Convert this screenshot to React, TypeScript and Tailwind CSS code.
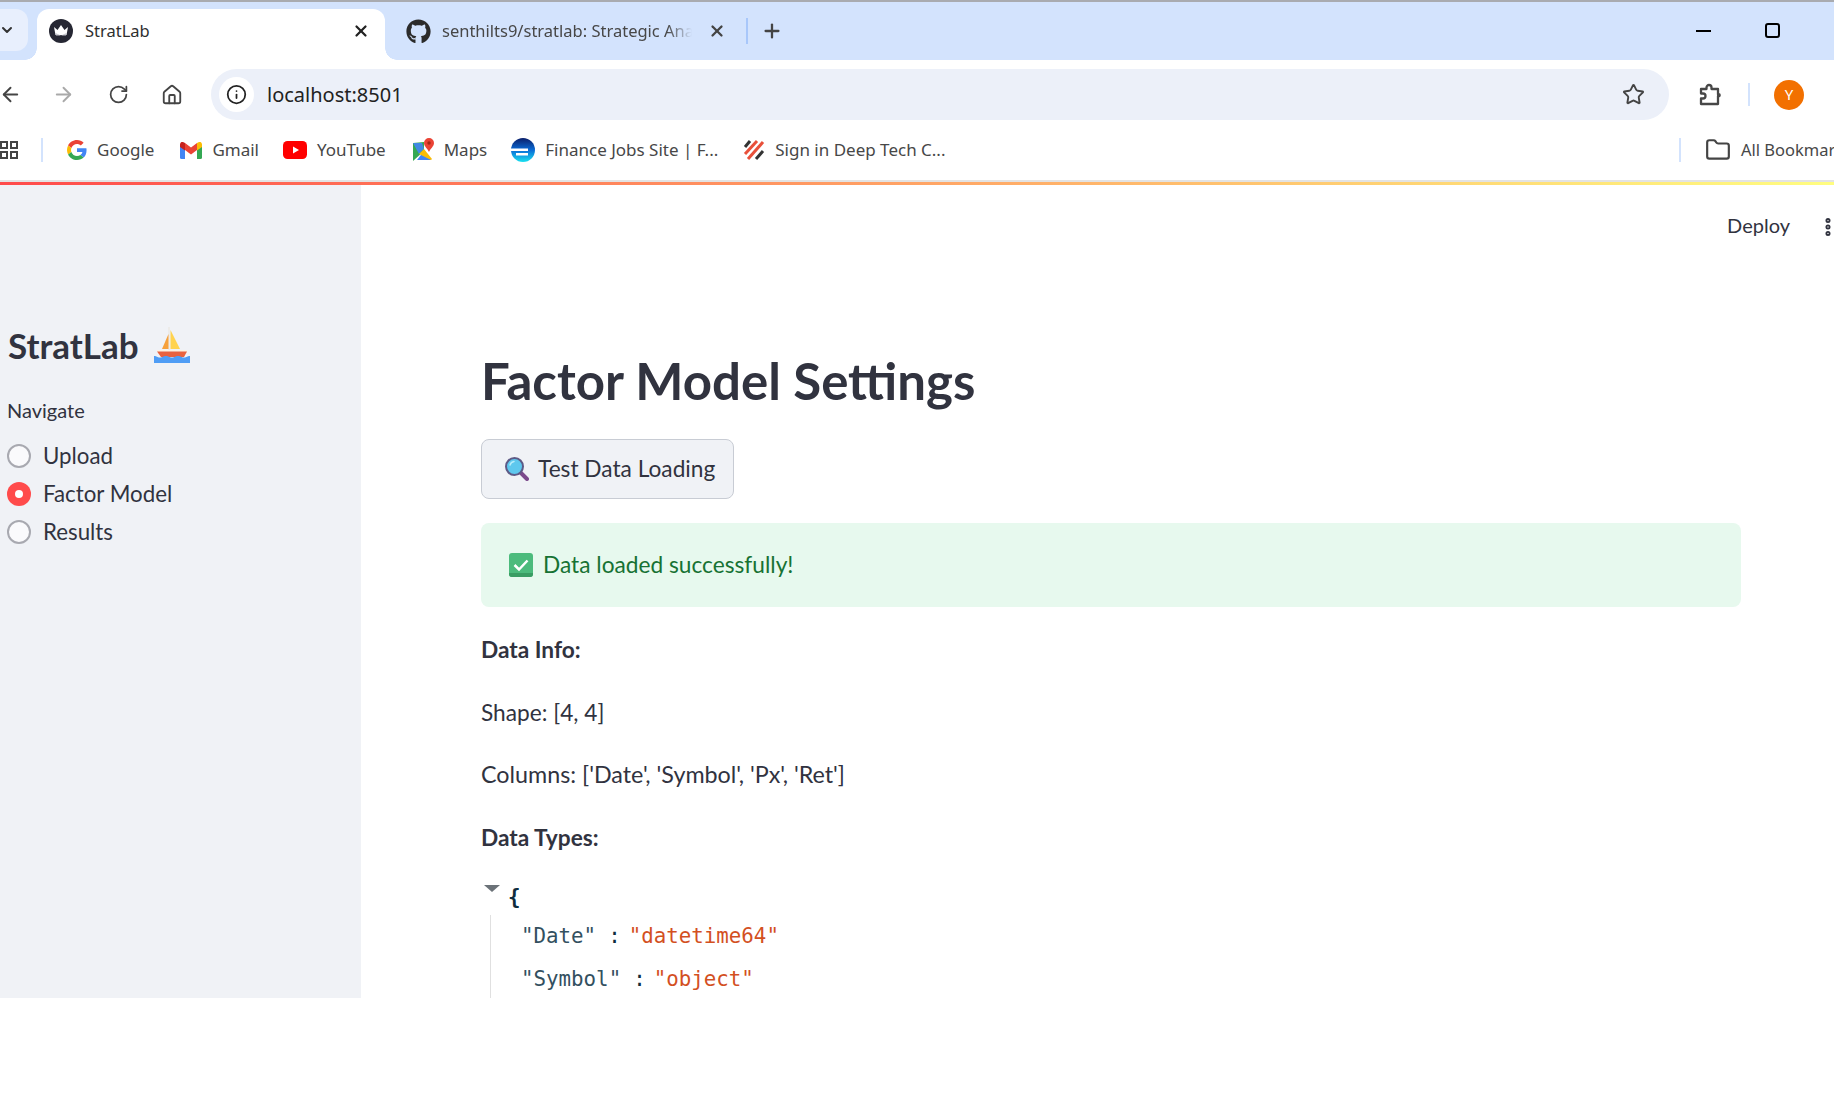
import { ArrowLeft, ArrowRight, ChevronDown, Folder, House, Info, MoreVertical, Plus, RotateCw, Star, X } from 'lucide-react';
import { FaGithub } from 'react-icons/fa';

const ui = "font-['Noto_Sans',sans-serif]";
const doc = "font-['Lato','Noto_Sans',sans-serif]";

function CrownIcon() {
  return (
    <svg width="24" height="24" viewBox="0 0 24 24">
      <circle cx="12" cy="12" r="12" fill="#262733" />
      <path d="M5 8l3.500 3L12 6l3.500 5L19 8l-1.500 8h-11z" fill="#fff" />
      <path d="M6.500 14l5.500 2.500 5.500-2.500-.5 2.500h-10z" fill="#c9c9d0" />
    </svg>
  );
}

function GoogleIcon() {
  return (
    <svg width="20" height="20" viewBox="0 0 48 48">
      <path fill="#EA4335" d="M24 9.500c3.500 0 6.700 1.200 9.100 3.600l6.800-6.800C35.800 2.500 30.400 0 24 0 14.600 0 6.500 5.400 2.600 13.200l7.900 6.100C12.400 13.700 17.700 9.500 24 9.500z" />
      <path fill="#4285F4" d="M46.900 24.500c0-1.600-.1-3.100-.4-4.500H24v9h12.900c-.6 3-2.200 5.400-4.700 7.100l7.700 6c4.500-4.200 7-10.300 7-17.600z" />
      <path fill="#FBBC05" d="M10.500 28.700c-.5-1.400-.8-3-.8-4.700s.3-3.200.8-4.700l-7.900-6.100C.9 16.500 0 20.100 0 24s.9 7.500 2.600 10.800z" />
      <path fill="#34A853" d="M24 48c6.500 0 11.900-2.100 15.900-5.900l-7.700-6c-2.200 1.400-4.900 2.300-8.200 2.300-6.300 0-11.600-4.200-13.500-9.800l-7.900 6.100C6.500 42.600 14.600 48 24 48z" />
    </svg>
  );
}

function GmailIcon() {
  return (
    <svg width="22" height="17" viewBox="0 0 22 17">
      <path d="M0 3v12.500A1.500 1.500 0 0 0 1.500 17H5V7z" fill="#4285F4" />
      <path d="M17 7v10h3.500a1.500 1.500 0 0 0 1.500-1.500V3z" fill="#34A853" />
      <path d="M5 1v7l6 4.500L17 8V1l-6 4.500z" fill="#EA4335" />
      <path d="M0 2.500V5l5 3.500V1L3 0C1.500-.5 0 .8 0 2.500z" fill="#C5221F" />
      <path d="M17 1v7.500L22 5V2.500C22 .8 20.500-.5 19 0z" fill="#FBBC04" />
    </svg>
  );
}

function YoutubeIcon() {
  return (
    <svg width="24" height="18" viewBox="0 0 24 18">
      <rect width="24" height="18" rx="4.500" fill="#f00" />
      <path d="M10 5.500v7l6-3.500z" fill="#fff" />
    </svg>
  );
}

function MapsIcon() {
  return (
    <svg width="22" height="24" viewBox="0 0 22 24">
      <path d="M1 5l11-1v9L1 23z" fill="#34a853" />
      <path d="M1 5h9l2 6-5 5z" fill="#4285f4" opacity="0.9" />
      <path d="M5 22l7-9 7 9z" fill="#4285f4" />
      <path d="M7 16l5-5 8 10-1 1z" fill="#fbbc04" />
      <path d="M17 0a5 5 0 0 1 5 5c0 3.500-4 6-5 9-1-3-5-5.500-5-9a5 5 0 0 1 5-5z" fill="#ea4335" />
      <circle cx="17" cy="5" r="1.700" fill="#a52714" />
    </svg>
  );
}

function FinanceIcon() {
  return (
    <svg width="24" height="24" viewBox="0 0 24 24">
      <defs>
        <linearGradient id="fin" x1="0" y1="0" x2="0" y2="1">
          <stop offset="0" stopColor="#0b1f6a" />
          <stop offset="0.5" stopColor="#0a6bd6" />
          <stop offset="1" stopColor="#19e0f0" />
        </linearGradient>
      </defs>
      <circle cx="12" cy="12" r="12" fill="url(#fin)" />
      <path d="M0 10.500h17v2.500H0zM5 15h12v2.500H5z" fill="#fff" />
    </svg>
  );
}

function DeepTechIcon() {
  return (
    <svg width="22" height="22" viewBox="0 0 22 22" strokeWidth="3">
      <path d="M2 8l5-6" stroke="#333" />
      <path d="M2 15L14 2" stroke="#e8503a" />
      <path d="M5 20L20 3" stroke="#e8503a" />
      <path d="M13 20l7-8" stroke="#333" />
    </svg>
  );
}

function BoatIcon() {
  return (
    <svg width="36" height="36" viewBox="0 0 36 36">
      <path d="M14.500 0h1v24h-1z" fill="#e8e4dc" />
      <path d="M14.500 7v15H8z" fill="#f6a13c" />
      <path d="M16.500 3L26 22h-9.500z" fill="#ffd34f" />
      <path d="M3 23h30v1.500H3z" fill="#fff3e0" />
      <path d="M3 24.500h30l-3 5.500H7z" fill="#e8623e" />
      <path d="M0 29c3 0 3 1.500 6 1.500S9 29 12 29s3 1.500 6 1.500 3-1.500 6-1.500 3 1.500 6 1.500 3-1.500 6-1.500v7H0z" fill="#4f9df5" />
    </svg>
  );
}

function MagnifierIcon() {
  return (
    <svg width="24" height="24" viewBox="0 0 24 24">
      <path d="M15 15l7 7" stroke="#7c4a8c" strokeWidth="4" strokeLinecap="round" />
      <circle cx="9.500" cy="9.500" r="8.500" fill="#5ec8ee" stroke="#5d5a86" strokeWidth="2" />
      <path d="M5 8a5 5 0 0 1 4-3.500" stroke="#b5ecfa" strokeWidth="1.500" fill="none" strokeLinecap="round" />
    </svg>
  );
}

function CheckIcon() {
  return (
    <svg width="24" height="24" viewBox="0 0 24 24">
      <rect width="24" height="24" rx="3" fill="#4cbb7c" />
      <path d="M0 21a3 3 0 0 0 3 3h18a3 3 0 0 0 3-3v-1H0z" fill="#3a9d63" />
      <path d="M5.500 12l4.500 4.500 8.500-9" stroke="#fff" strokeWidth="2.500" fill="none" />
    </svg>
  );
}

// chrome's extensions button, lucide's puzzle piece looks different
function ExtensionIcon() {
  return (
    <svg width="25" height="25" viewBox="0 0 25 25" fill="none" stroke="#474747" strokeWidth="2.300" strokeLinejoin="round">
      <path d="M3 7h5.500V5.500a2.500 2.500 0 0 1 5 0V7H20v5.500h1.500a2.500 2.500 0 0 1 0 1.500H20v8H3v-5.500h2a2.500 2.500 0 0 0 0-5H3z" />
    </svg>
  );
}

function Bookmark({ icon, label, className }: { icon: React.ReactNode; label: string; className: string }) {
  return (
    <div className={`flex items-center gap-[10px] ${className}`}>
      {icon}
      <span className="text-[17px] whitespace-nowrap text-[#474747]">{label}</span>
    </div>
  );
}

function Radio({ label, checked }: { label: string; checked?: boolean }) {
  return (
    <div className="flex h-[38px] items-center gap-[12px] pl-[7px]">
      {checked ? (
        <div className="flex h-6 w-6 items-center justify-center rounded-full bg-[#ff4b4b]">
          <div className="h-2 w-2 rounded-full bg-white" />
        </div>
      ) : (
        <div className="h-6 w-6 rounded-full border-2 border-[#a8a9b0] bg-[#fafafc]" />
      )}
      <span className="text-[22.300px] text-[#31333f]">{label}</span>
    </div>
  );
}

export default function App() {
  return (
    <div className="h-[1098px] w-[1834px] overflow-hidden bg-white">
      {/* Browser tabs */}
      <div className={`flex h-[60px] items-end border-t-2 border-[#a9abb0] bg-[#d3e3fd] ${ui}`}>
        <div className="mb-[9px] flex h-[42px] w-[28px] items-center justify-end rounded-r-xl bg-[#e8effd] pr-[13px]">
          <ChevronDown size={16} strokeWidth={3} className="shrink-0 text-[#333]" />
        </div>
        <div className="relative ml-[9px] flex h-[51px] w-[348px] items-center rounded-t-xl bg-white pb-[7px] pl-[12px] pr-[15px]">
          <div className="absolute bottom-0 left-[-12px] h-[12px] w-[12px] bg-[radial-gradient(circle_at_0_0,transparent_11.500px,white_12px)]" />
          <CrownIcon />
          <span className="ml-[12px] text-[16.500px] text-[#2f2f2f]">StratLab</span>
          <X size={18} strokeWidth={3} className="ml-auto text-[#222]" />
          <div className="absolute bottom-0 right-[-12px] h-[12px] w-[12px] bg-[radial-gradient(circle_at_100%_0,transparent_11.500px,white_12px)]" />
        </div>
        <div className="flex h-[51px] w-[420px] items-center pb-[7px] pl-[21px]">
          <FaGithub size={25} className="shrink-0 text-[#2b2b2b]" />
          <span className="ml-[11px] w-[250px] shrink-0 overflow-hidden text-[16.500px] whitespace-nowrap text-[#474747] [mask-image:linear-gradient(90deg,#000_90%,transparent)]">senthilts9/stratlab: Strategic Ana</span>
          <X size={18} strokeWidth={3} className="ml-[16px] shrink-0 text-[#444]" />
          <div className="ml-[20px] h-[26px] w-[2px] shrink-0 bg-[#a8c7fa]" />
          <Plus size={22} strokeWidth={2.500} className="ml-[13px] shrink-0 text-[#444]" />
        </div>
        <div className="mb-[22px] ml-auto flex items-center gap-[54px] pr-[54px]">
          <div className="h-[2px] w-[15px] bg-black" />
          <div className="h-[15px] w-[15px] rounded-[3px] border-2 border-black" />
        </div>
      </div>

      {/* Toolbar */}
      <div className={`flex h-[60px] items-center pt-[9px] ${ui}`}>
        <ArrowLeft size={23} strokeWidth={2} className="ml-[-1px] text-[#444]" />
        <ArrowRight size={23} strokeWidth={2} className="ml-[30px] text-[#a9a9a9]" />
        <RotateCw size={21} strokeWidth={2} className="ml-[33px] text-[#444]" />
        <House size={22} strokeWidth={2} className="ml-[32px] text-[#444]" />
        <div className="ml-[28px] flex h-[51px] w-[1458px] items-center rounded-full bg-[#ecf0f9] pl-[8px] pr-[24px]">
          <div className="flex h-[35px] w-[35px] items-center justify-center rounded-full bg-white">
            <Info size={21} strokeWidth={2} className="text-[#222]" />
          </div>
          <span className="ml-[13px] text-[20px] text-[#222]">localhost:8501</span>
          <Star size={23} strokeWidth={2} className="ml-auto text-[#444]" />
        </div>
        <div className="ml-[29px]"><ExtensionIcon /></div>
        <div className="ml-[25px] h-[23px] w-[2px] bg-[#d3e3fd]" />
        <div className="ml-[24px] flex h-[30px] w-[30px] items-center justify-center rounded-full bg-[#f27000] text-[15px] text-white">Y</div>
      </div>

      {/* Bookmarks */}
      <div className={`flex h-[62px] items-center border-b-2 border-[#e3e3e3] ${ui}`}>
        <div className="grid w-[17px] grid-cols-2 gap-[2px]">
          <div className="h-[8px] w-[8px] border-2 border-[#444]" />
          <div className="h-[8px] w-[8px] border-2 border-[#444]" />
          <div className="h-[8px] w-[8px] border-2 border-[#444]" />
          <div className="h-[8px] w-[8px] border-2 border-[#444]" />
        </div>
        <div className="ml-[24px] h-[24px] w-[2px] bg-[#d3e3fd]" />
        <Bookmark className="ml-[24px]" icon={<GoogleIcon />} label="Google" />
        <Bookmark className="ml-[26px]" icon={<GmailIcon />} label="Gmail" />
        <Bookmark className="ml-[24px]" icon={<YoutubeIcon />} label="YouTube" />
        <Bookmark className="ml-[26px]" icon={<MapsIcon />} label="Maps" />
        <Bookmark className="ml-[24px]" icon={<FinanceIcon />} label="Finance Jobs Site | F..." />
        <Bookmark className="ml-[25px]" icon={<DeepTechIcon />} label="Sign in Deep Tech C..." />
        <div className="ml-auto flex w-[155px] shrink-0 items-center overflow-hidden">
          <div className="h-[24px] w-[2px] shrink-0 bg-[#d3e3fd]" />
          <Folder size={26} strokeWidth={2} className="ml-[24px] shrink-0 text-[#444]" />
          <span className="ml-[10px] text-[16.500px] whitespace-nowrap text-[#474747]">All Bookmarks</span>
        </div>
      </div>
      <div className="h-[3px] bg-[linear-gradient(90deg,#ff4b4b,#fffd80)]" />

      {/* Streamlit page */}
      <div className={`flex h-[813px] overflow-hidden ${doc}`}>
        <aside className="w-[361px] shrink-0 bg-[#f0f2f6]">
          <div className="mt-[134px] flex items-center gap-[15px] pl-[8px]">
            <h2 className="text-[35px] font-bold text-[#31333f]">StratLab</h2>
            <BoatIcon />
          </div>
          <div className="mt-[23px] pl-[7px] text-[20px] text-[#31333f]">Navigate</div>
          <div className="mt-[12px]">
            <Radio label="Upload" />
            <Radio label="Factor Model" checked />
            <Radio label="Results" />
          </div>
        </aside>
        <main className="relative min-w-0 flex-1 pl-[120px]">
          <div className="absolute right-[-5px] top-[25px] flex items-center gap-[27px] text-[20px] text-[#31333f]">
            <span className="mb-[4px]">Deploy</span>
            <MoreVertical size={22} strokeWidth={3.500} className="text-[#31333f]" />
          </div>
          <div className="w-[1260px]">
            <h1 className="mt-[159px] text-[51px] leading-[74px] font-bold text-[#31333f]">Factor Model Settings</h1>
            <button className="mt-[21px] flex h-[60px] w-[253px] items-center gap-[9px] rounded-[8px] border border-[#c8ccd4] bg-[#f0f2f6] pl-[23px] text-[22.700px] text-[#31333f]">
              <MagnifierIcon />
              Test Data Loading
            </button>
            <div className="mt-[24px] flex h-[84px] items-center gap-[10px] rounded-[8px] bg-[#e7f9ee] pl-[28px] text-[22.700px] text-[#177233]">
              <CheckIcon />
              Data loaded successfully!
            </div>
            <div className="mt-[26px] flex flex-col gap-[29.500px] text-[22.700px] leading-[33px] text-[#31333f]">
              <p className="font-bold">Data Info:</p>
              <p>Shape: [4, 4]</p>
              <p className="text-[23.300px]">Columns: ['Date', 'Symbol', 'Px', 'Ret']</p>
              <p className="font-bold">Data Types:</p>
            </div>
            <div className="relative mt-[28px] font-['DejaVu_Sans_Mono',monospace] text-[20.800px]">
              <div className="absolute left-[3px] top-[3px] h-0 w-0 border-x-[8px] border-t-[7px] border-x-transparent border-t-[#6b7278]" />
              <div className="pl-[27px] font-bold text-[#0f2d3d]">{'{'}</div>
              <div className="ml-[9px] mt-[2px] border-l border-[#e0e0e0] pl-[30px] text-[#33505f]">
                <div className="flex h-[43px] items-center">
                  <span>"Date"</span>
                  <span className="ml-[12px] text-[#0f2d3d]">:</span>
                  <span className="ml-[8px] text-[#d3501f]">"datetime64"</span>
                </div>
                <div className="flex h-[43px] items-center">
                  <span>"Symbol"</span>
                  <span className="ml-[12px] text-[#0f2d3d]">:</span>
                  <span className="ml-[8px] text-[#d3501f]">"object"</span>
                </div>
              </div>
            </div>
          </div>
        </main>
      </div>
    </div>
  );
}
